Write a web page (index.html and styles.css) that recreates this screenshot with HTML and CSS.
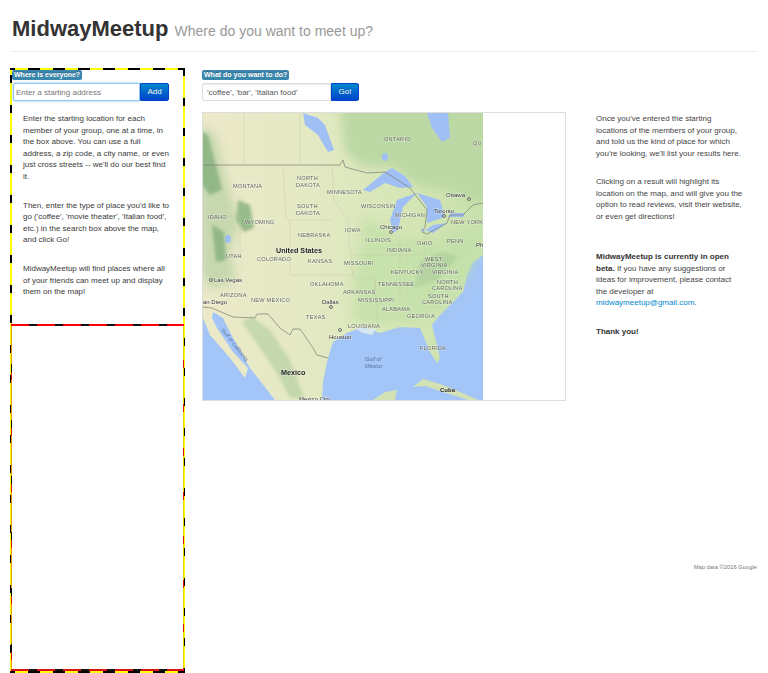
FILE: index.html
```html
<!DOCTYPE html>
<html lang="en">
<head>
<meta charset="utf-8">
<title>MidwayMeetup</title>
<link rel="stylesheet" href="styles.css">
</head>
<body>
<header class="page-header">
  <h1>MidwayMeetup <small>Where do you want to meet up?</small></h1>
</header>
<div class="layout">
  <aside class="sidebar">
    <div class="people">
      <span class="label">Where is everyone?</span>
      <form class="input-group">
        <input class="field field-focus field-start" placeholder="Enter a starting address">
        <button class="btn btn-add" type="button">Add</button>
      </form>
      <div class="help">
        <p>Enter the starting location for each member of your group, one at a time, in the box above. You can use a full address, a zip code, a city name, or even just cross streets -- we'll do our best find it.</p>
        <p>Then, enter the type of place you'd like to go ('coffee', 'movie theater', 'Italian food', etc.) in the search box above the map, and click Go!</p>
        <p>MidwayMeetup will find places where all of your friends can meet up and display them on the map!</p>
      </div>
    </div>
    <div class="list-box"></div>
  </aside>
  <main class="main">
    <span class="label">What do you want to do?</span>
    <form class="input-group">
      <input class="field field-what" placeholder="'coffee', 'bar', 'Italian food'">
      <button class="btn btn-go" type="button">Go!</button>
    </form>
    <div class="map-box">
      <svg class="map" width="280" height="287" viewBox="203 113 280 287" xmlns="http://www.w3.org/2000/svg">
        <defs>
          <filter id="soft" x="-5%" y="-5%" width="110%" height="110%"><feGaussianBlur stdDeviation="0.6"/></filter>
          <filter id="softer" x="-30%" y="-30%" width="160%" height="160%"><feGaussianBlur stdDeviation="5"/></filter>
          <filter id="mid" x="-30%" y="-30%" width="160%" height="160%"><feGaussianBlur stdDeviation="1.5"/></filter>
          <linearGradient id="land" x1="0" y1="0" x2="1" y2="0">
            <stop offset="0" stop-color="#ece9c9"/>
            <stop offset="0.4" stop-color="#e3e9c3"/>
            <stop offset="0.7" stop-color="#d6e6b6"/>
            <stop offset="1" stop-color="#c8e1ac"/>
          </linearGradient>
        </defs>
        <rect class="sea" x="203" y="113" width="280" height="287"/>
        <g filter="url(#soft)">
          <path fill="url(#land)" d="M203 113H483V255L473 262L467 275L463 292L440 315L432 325L440 358L437 363L430 352L420 328L400 327L380 333L363 327L347 333L333 342L328 358L323 382L322 400H275L250 368L233 338L223 318L213 312L212 318L217 328L233 352L248 368L245 378L230 358L210 335L203 318Z"/>
        </g>
        <g filter="url(#softer)">
          <path class="canada" d="M340 105H490V205L470 200L445 190L415 185L395 168L360 165L345 150Z"/>
          <path class="east" d="M365 215L400 240L440 240L480 225V250L465 280L440 310L410 322L370 325L352 320L355 270Z"/>
          <path class="forest" d="M198 125L216 135L224 170L232 200L240 222L230 250L236 280L212 290L198 270Z"/>
        </g>
        <g filter="url(#mid)">
          <path class="peaks" d="M198 130L208 135L216 165L222 190L210 195L198 180Z"/>
          <path class="peaks" d="M238 200L250 205L254 228L244 232L236 220Z"/>
          <path class="peaks" d="M212 225L224 232L226 260L216 262Z"/>
          <path class="forest" d="M242 322L258 345L278 375L290 398L304 398L290 360L270 330L252 317Z"/>
          <path class="forest" d="M420 262L440 252L458 256L438 280L414 288Z"/>
        </g>
        <g filter="url(#soft)">
          <path class="water" d="M363 190L385 172L392 168L405 176L413 187L400 188L385 183L370 192Z"/>
          <path class="water" d="M393 233L390 220L397 200L417 193L403 207L398 230Z"/>
          <path class="water" d="M417 193L440 200L445 217L427 223L427 207Z"/>
          <path class="water" d="M420 228L433 233L447 223L433 225L423 232Z"/>
          <path class="water" d="M448 217L451 213L465 213L463 217Z"/>
          <path class="water" d="M427 113H448L450 138L442 142L432 128Z"/>
          <path class="water" d="M303 113L318 118L325 125L334 150L328 152L318 135L305 125Z"/>
          <ellipse class="water" cx="385" cy="157" rx="3" ry="4"/>
          <ellipse class="water" cx="228" cy="239" rx="3" ry="4"/>
          <path class="land-cuba" d="M413 387L423 379L440 384L460 392L478 400H468L443 392L425 386Z"/>
          <path class="land-cuba" d="M373 400L385 392L397 390L395 400Z"/>
          <path class="bright" d="M356 328L376 329L372 335L360 332Z"/>
        </g>
        <g class="border-line">
          <path d="M203 165H340L343 160L345 167L367 173L385 172L410 188L427 210L425 227L422 232L427 234L447 223L450 215L463 215L473 205L483 203"/>
          <path d="M203 307L212 308L233 317L255 318L257 314L268 314L280 328L290 335L293 329L300 329L313 348L317 355L328 358"/>
        </g>
        <g class="state-line">
          <path d="M244 113V165M300 113V165M283 165L286 220H332M332 165L334 200L348 220L350 250L353 278L375 278V305M203 216H240M240 216V255M290 220V275H353M375 278L378 325M350 255H425M400 235V300M425 235V275L455 270"/>
        </g>
        <g class="map-text">
          <text x="384" y="141">ONTARIO</text><text x="473" y="145">QU</text>
          <text x="297" y="180">NORTH</text><text x="296" y="187">DAKOTA</text>
          <text x="233" y="188">MONTANA</text>
          <text x="327" y="194">MINNESOTA</text>
          <text x="297" y="208">SOUTH</text><text x="296" y="215">DAKOTA</text>
          <text x="361" y="208">WISCONSIN</text>
          <text x="395" y="217">MICHIGAN</text>
          <text x="208" y="219">IDAHO</text>
          <text x="245" y="224">WYOMING</text>
          <text x="345" y="232">IOWA</text>
          <text x="298" y="237">NEBRASKA</text>
          <text x="366" y="242">ILLINOIS</text>
          <text x="417" y="245">OHIO</text>
          <text x="447" y="243">PENN</text>
          <text x="451" y="224">NEW YORK</text>
          <text x="387" y="252">INDIANA</text>
          <text x="226" y="258">UTAH</text>
          <text x="257" y="261">COLORADO</text>
          <text x="308" y="263">KANSAS</text>
          <text x="344" y="265">MISSOURI</text>
          <text x="425" y="261">WEST</text><text x="421" y="267">VIRGINIA</text>
          <text x="391" y="274">KENTUCKY</text><text x="432" y="274">VIRGINIA</text>
          <text x="437" y="284">NORTH</text><text x="432" y="290">CAROLINA</text>
          <text x="378" y="286">TENNESSEE</text>
          <text x="310" y="286">OKLAHOMA</text>
          <text x="343" y="294">ARKANSAS</text>
          <text x="358" y="302">MISSISSIPPI</text>
          <text x="251" y="302">NEW MEXICO</text>
          <text x="220" y="297">ARIZONA</text>
          <text x="428" y="298">SOUTH</text><text x="422" y="304">CAROLINA</text>
          <text x="382" y="311">ALABAMA</text>
          <text x="407" y="318">GEORGIA</text>
          <text x="306" y="319">TEXAS</text>
          <text x="348" y="328">LOUISIANA</text>
          <text x="420" y="350">FLORIDA</text>
        </g>
        <g class="city-text">
          <text x="446" y="197">Ottawa</text><text x="434" y="213">Toronto</text>
          <text x="380" y="229">Chicago</text><text x="322" y="304">Dallas</text>
          <text x="329" y="339">Houston</text><text x="203" y="304">an Diego</text>
          <text x="214" y="282">Las Vegas</text><text x="299" y="401">Mexico City</text>
          <text x="476" y="247">Ph</text>
        </g>
        <g class="big-text"><text x="276" y="253">United States</text><text x="281" y="375">Mexico</text><text class="cuba" x="440" y="392">Cuba</text></g>
        <g class="sea-text">
          <text x="365" y="361">Gulf of</text><text x="365" y="368">Mexico</text>
          <text transform="translate(221 330) rotate(52)">Gulf of California</text>
        </g>
        <g class="dots">
          <circle cx="469" cy="199" r="1.4"/><circle cx="444" cy="216" r="1.4"/><circle cx="391" cy="232" r="1.4"/>
          <circle cx="331" cy="307" r="1.4"/><circle cx="340" cy="330" r="1.4"/><circle cx="211" cy="280" r="1.4"/>
        </g>
      </svg>
    </div>
  </main>
  <section class="info">
    <div class="info-text">
      <p class="gap-l">Once you've entered the starting locations of the members of your group, and told us the kind of place for which you're looking, we'll list your results here.</p>
      <p class="gap-xl">Clicking on a result will highlight its location on the map, and will give you the option to read reviews, visit their website, or even get directions!</p>
      <p class="gap-m"><strong>MidwayMeetup is currently in open beta.</strong> If you have any suggestions or ideas for improvement, please contact the developer at <a href="#">midwaymeetup@gmail.com</a>.</p>
      <p><strong>Thank you!</strong></p>
    </div>
    <div class="attribution">Map data ©2016 Google</div>
  </section>
</div>
</body>
</html>
```

FILE: styles.css
```css
* { box-sizing: border-box; }
html, body { margin: 0; height: 673px; overflow: hidden; background: #fff; }
body { font-family: "Liberation Sans", Arial, sans-serif; color: #333; font-size: 8px; line-height: 11.5px; }

.page-header { margin: 0 11px; height: 52px; padding-top: 15px; border-bottom: 1px solid #eee; }
h1 { margin: 0; font-size: 22px; line-height: 28px; font-weight: bold; color: #333; padding-left: 1px; }
small { font-size: 14px; font-weight: normal; color: #999; margin-left: 0; }

.layout { display: flex; align-items: flex-start; margin-top: 16px; padding-left: 10px; }

.sidebar {
  width: 175px; height: 605px; flex: none; padding: 2px;
  display: flex; flex-direction: column;
  background-color: #fff;
  background-image:
    repeating-linear-gradient(90deg, #000 0 5px, #ff0 5px 18px, #000 18px 25px),
    repeating-linear-gradient(90deg, #000 0 5px, #ff0 5px 18px, #000 18px 25px),
    repeating-linear-gradient(180deg, #ff0 0 7px, #000 7px 15px, #ff0 15px 30px),
    repeating-linear-gradient(180deg, #000 0 8px, #ff0 8px 30px);
  background-size: 100% 2px, 100% 2px, 2px 100%, 2px 100%;
  background-position: 0 0, 0 100%, 0 0, 100% 0;
  background-repeat: no-repeat;
}
.people { height: 254px; flex: none; }
.list-box {
  height: 347px; flex: none; margin: 0 -1px;
  background-image:
    repeating-linear-gradient(90deg, #f00 0 18px, #111 18px 26px),
    repeating-linear-gradient(90deg, #e01010 0 18px, #111 18px 26px),
    repeating-linear-gradient(180deg, #e8a000 0 40px, #111 40px 48px, #d81818 48px 56px),
    repeating-linear-gradient(180deg, #e8d800 0 36px, #d81818 36px 44px);
  background-size: 100% 2px, 100% 2px, 1px 100%, 1px 100%;
  background-position: 0 0, 0 100%, 0 0, 100% 0;
  background-repeat: no-repeat;
}

.label {
  display: block; width: fit-content; height: 10px; padding: 0 2px;
  background: #3a87ad; border-radius: 2px; color: #fff;
  font-size: 7px; line-height: 10px; font-weight: bold; white-space: nowrap;
  text-shadow: 0 -1px 0 rgba(0, 0, 0, .25);
}
.input-group { display: flex; margin: 3px 0 0; height: 18px; }
.sidebar .input-group { margin-left: 1px; }
.field {
  height: 18px; padding: 0 3px; margin: 0; background: #fff; color: #555;
  border: 1px solid #ddd; border-radius: 2px 0 0 2px;
  font: 8px/16px "Liberation Sans", Arial, sans-serif; outline: 0;
  box-shadow: inset 0 1px 1px rgba(0, 0, 0, .07);
}
.field::placeholder { color: #777; opacity: 1; }
.field-focus { border-color: #8fc6ea; box-shadow: 0 0 3px rgba(82, 168, 236, .6); }
.field-start { width: 127px; padding-left: 2px; }
.field-what { width: 129px; padding-left: 4px; }
.field-what::placeholder { color: #555; }
.btn {
  height: 18px; padding: 0; border: 1px solid #04c; border-radius: 0 2px 2px 0;
  background: linear-gradient(#08c, #04c); color: #fff;
  font: 8px/16px "Liberation Sans", Arial, sans-serif;
  text-shadow: 0 -1px 0 rgba(0, 0, 0, .25);
}
.btn-add { width: 29px; }
.btn-go { width: 28px; }

.help { padding: 12px 10px 0 11px; color: #3a3a3a; }
.help p { margin: 0 0 17.5px; }

.main { width: 364px; flex: none; margin-left: 17px; padding-top: 2px; }
.map-box { width: 364px; height: 289px; margin-top: 11px; border: 1px solid #ddd; background: #fff; }
.map { display: block; }
.sea { fill: #a4c5f7; }
.canada { fill: #bcd8a4; }
.east { fill: #c0dfa6; opacity: .7; }
.forest { fill: #a3c896; opacity: .5; }
.peaks { fill: #86b07e; opacity: .8; }
.water { fill: #a0bff4; }
.land-cuba { fill: #d2e2b4; }
.bright { fill: #d6e8ee; }
.border-line { fill: none; stroke: #7d7d72; stroke-width: .7; }
.state-line { fill: none; stroke: #c4c6a8; stroke-width: .4; }
.map-text text { font-size: 5.6px; fill: #5d6358; letter-spacing: .25px; stroke: rgba(255, 255, 255, .45); stroke-width: 1px; paint-order: stroke; }
.city-text text { font-size: 6px; fill: #333; stroke: rgba(255, 255, 255, .5); stroke-width: 1px; paint-order: stroke; }
.big-text text { font-size: 7.2px; font-weight: bold; fill: #222; stroke: rgba(255, 255, 255, .4); stroke-width: 1px; paint-order: stroke; }
.big-text .cuba { font-size: 6px; }
.sea-text text { font-size: 5.4px; font-style: italic; fill: #53709c; }
.dots circle { fill: #fff; stroke: #222; stroke-width: .7; }

.info { flex: 1; min-width: 0; padding: 0 11px 0 30px; position: relative; }
.info-text { padding: 45px 13px 0 0; color: #444; }
.info-text p { margin: 0; }
.info-text .gap-l { margin-bottom: 17px; }
.info-text .gap-xl { margin-bottom: 29px; }
.info-text .gap-m { margin-bottom: 17px; }
.info-text strong { color: #333; }
.info-text a { color: #08c; text-decoration: none; }
.attribution { margin: 226px 0 0 -30px; text-align: right; font-size: 5.8px; color: #777; line-height: 8px; }
```
